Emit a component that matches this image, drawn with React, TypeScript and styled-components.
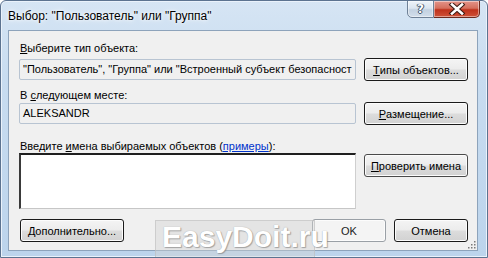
import styled, { createGlobalStyle } from "styled-components";

const GlobalStyle = createGlobalStyle`
  html, body {
    margin: 0;
    padding: 0;
    background: #ffffff;
  }
  body {
    font-family: "Liberation Sans", Arial, sans-serif;
    font-size: 11px;
    color: #000;
  }
`;

const Window = styled.div`
  position: relative;
  width: 488px;
  height: 258px;
  box-sizing: border-box;
  border: 1px solid #5c7390;
  border-radius: 6px 6px 0 0;
  background: linear-gradient(180deg, #d6e5f4 0%, #c8dcf0 30%, #bcd4ec 100%);
  box-shadow: inset 0 0 0 1px #eaf2fb;
  display: flex;
  flex-direction: column;
  overflow: hidden;
`;

const TitleBar = styled.div`
  height: 29px;
  display: flex;
  align-items: flex-start;
  justify-content: space-between;
  padding-left: 7px;
`;

const Title = styled.div`
  margin-top: 8px;
  font-size: 12px;
  line-height: 15px;
  color: #000;
  text-shadow: 0 0 6px #ffffff, 0 0 3px #ffffff;
`;

const Controls = styled.div`
  display: flex;
  margin-right: 7px;
  margin-top: -1px;
`;

const CaptionButton = styled.div<{ $kind: "help" | "close" }>`
  height: 18px;
  width: ${({ $kind }) => ($kind === "close" ? "46px" : "27px")};
  box-sizing: border-box;
  border: 1px solid ${({ $kind }) => ($kind === "close" ? "#6b2a1f" : "#6f8197")};
  border-left-width: ${({ $kind }) => ($kind === "close" ? "0" : "1px")};
  border-radius: ${({ $kind }) => ($kind === "close" ? "0 0 5px 0" : "0 0 0 5px")};
  background: ${({ $kind }) =>
    $kind === "close"
      ? "linear-gradient(180deg, #e3948a 0%, #d56f5d 45%, #bf321c 55%, #cf5238 100%)"
      : "linear-gradient(180deg, #eef3f9 0%, #dbe5f0 45%, #c3d1e1 55%, #d2deeb 100%)"};
  display: flex;
  align-items: center;
  justify-content: center;
  box-shadow: inset 0 0 0 1px rgba(255, 255, 255, 0.45);
`;

const HelpGlyph = styled.span`
  font-family: "DejaVu Sans", sans-serif;
  font-weight: bold;
  font-size: 12px;
  line-height: 12px;
  color: #ffffff;
  text-shadow: 0 0 1px #2a3a50, 1px 0 0 #4b5d74, -1px 0 0 #4b5d74, 0 1px 0 #4b5d74;
`;

const Client = styled.div`
  position: relative;
  flex: 1;
  margin: 0 9px 6px 7px;
  border: 1px solid #8da3bb;
  background: #f0f0f0;
  padding: 10px 9px 0 10px;
  display: flex;
  flex-direction: column;
`;

const Label = styled.div<{ $top: number }>`
  margin-top: ${({ $top }) => $top}px;
  line-height: 14px;
  height: 14px;
  padding-left: 1px;
  white-space: nowrap;
`;

const Key = styled.span`
  text-decoration: underline;
`;

const Link = styled.span`
  color: #0033cc;
  text-decoration: underline;
`;

const Row = styled.div<{ $top: number }>`
  margin-top: ${({ $top }) => $top}px;
  display: grid;
  grid-template-columns: 337px 104px;
  column-gap: 8px;
  align-items: start;
`;

const ReadField = styled.div`
  margin-top: 1px;
  height: 21px;
  box-sizing: border-box;
  border: 1px solid #b8c4d2;
  border-radius: 2px;
  background: #f0f0f0;
  padding: 0 3px;
  line-height: 19px;
  white-space: nowrap;
  overflow: hidden;
`;

const NamesBox = styled.div`
  height: 56px;
  box-sizing: border-box;
  background: #ffffff;
  border-top: 2px solid #1f1f1f;
  border-left: 2px solid #3a3a3a;
  border-right: 1px solid #cfcfcf;
  border-bottom: 1px solid #c6c6c6;
`;

const Button = styled.div<{ $muted?: boolean; $width?: number; $soft?: boolean }>`
  width: ${({ $width }) => ($width ? `${$width}px` : "auto")};
  height: 23px;
  box-sizing: border-box;
  border: 1px solid
    ${({ $muted, $soft }) => ($muted ? "#9aa0a6" : $soft ? "#4a4a4a" : "#1a1a1a")};
  border-radius: 3px;
  background: ${({ $muted }) =>
    $muted
      ? "#f4f4f4"
      : "linear-gradient(180deg, #f4f4f4 0%, #ececec 48%, #dcdcdc 52%, #d2d2d2 100%)"};
  box-shadow: inset 0 0 0 1px #fcfcfc;
  display: flex;
  align-items: center;
  justify-content: center;
  line-height: 14px;
  white-space: nowrap;
  color: ${({ $muted }) => ($muted ? "#222" : "#000")};
`;

const Footer = styled.div`
  margin-top: 10px;
  display: flex;
  align-items: center;
  padding-left: 1px;
`;

const Spacer = styled.div`
  flex: 1;
`;

const FooterRight = styled.div`
  display: flex;
  gap: 8px;
`;

const Grip = styled.svg`
  position: absolute;
  right: 1px;
  bottom: 1px;
`;

const WatermarkBox = styled.div`
  position: absolute;
  left: 146px;
  top: 189px;
  width: 158px;
  height: 40px;
  background: rgba(210, 210, 210, 0.4);
  border: 1px solid rgba(185, 185, 185, 0.55);
`;

const Watermark = styled.div`
  position: absolute;
  left: 153px;
  top: 188px;
  font-family: "Liberation Sans", Arial, sans-serif;
  font-weight: bold;
  font-size: 30px;
  line-height: 36px;
  color: #ffffff;
  text-shadow: 0 0 1px #9a9a9a, 1px 1px 1px rgba(120, 120, 120, 0.6);
  pointer-events: none;
  white-space: nowrap;
`;

export default function App() {
  return (
    <>
      <GlobalStyle />
      <Window>
        <TitleBar>
          <Title>Выбор: "Пользователь" или "Группа"</Title>
          <Controls>
            <CaptionButton $kind="help">
              <HelpGlyph>?</HelpGlyph>
            </CaptionButton>
            <CaptionButton $kind="close">
              <svg width="18" height="12" viewBox="0 0 18 12">
                <path
                  d="M4 1.5 L14 10.5 M14 1.5 L4 10.5"
                  stroke="#3a1a14"
                  strokeWidth="4.6"
                  strokeLinecap="square"
                />
                <path
                  d="M4 1.5 L14 10.5 M14 1.5 L4 10.5"
                  stroke="#ffffff"
                  strokeWidth="2.6"
                  strokeLinecap="square"
                />
              </svg>
            </CaptionButton>
          </Controls>
        </TitleBar>
        <Client>
          <Label $top={0}>
            <Key>В</Key>ыберите тип объекта:
          </Label>
          <Row $top={3}>
            <ReadField>
              "Пользователь", "Группа" или "Встроенный субъект безопасност
            </ReadField>
            <Button>
              <Key>Т</Key>ипы объектов...
            </Button>
          </Row>
          <Label $top={7}>
            В <Key>с</Key>ледующем месте:
          </Label>
          <Row $top={0}>
            <ReadField>ALEKSANDR</ReadField>
            <Button>
              <Key>Р</Key>азмещение...
            </Button>
          </Row>
          <Label $top={14}>
            Введите <Key>и</Key>мена выбираемых объектов (<Link>примеры</Link>):
          </Label>
          <Row $top={0}>
            <NamesBox />
            <Button style={{ marginTop: 1 }} $soft>
              <Key>П</Key>роверить имена
            </Button>
          </Row>
          <Footer>
            <Button $width={104}>
              <Key>Д</Key>ополнительно...
            </Button>
            <Spacer />
            <FooterRight>
              <Button $muted $width={74}>
                OK
              </Button>
              <Button $width={74}>Отмена</Button>
            </FooterRight>
          </Footer>
          <Grip width="10" height="10" viewBox="0 0 10 10">
            {[
              [8, 2],
              [8, 5],
              [8, 8],
              [5, 5],
              [5, 8],
              [2, 8],
            ].map(([x, y]) => (
              <rect key={`${x}-${y}`} x={x} y={y} width="1.5" height="1.5" fill="#7a7a7a" />
            ))}
          </Grip>
          <WatermarkBox />
          <Watermark>EasyDoit.ru</Watermark>
        </Client>
      </Window>
    </>
  );
}
